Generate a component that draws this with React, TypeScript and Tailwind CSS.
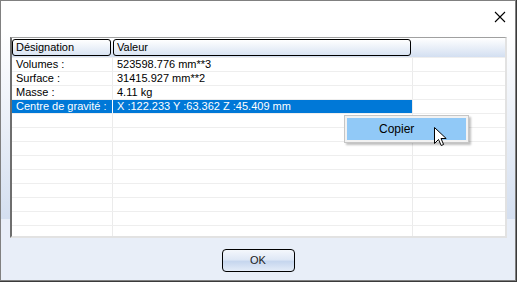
import React from "react";

const rows: [string, string][] = [
  ["Volumes :", "523598.776 mm**3"],
  ["Surface :", "31415.927 mm**2"],
  ["Masse :", "4.11 kg"],
  ["Centre de gravité :", "X :122.233 Y :63.362 Z :45.409 mm"],
];

export default function App() {
  const all: ([string, string] | null)[] = [...rows];
  for (let i = 0; i < 10; i++) all.push(null);
  return (
    <div
      className="w-[517px] h-[282px] bg-[#3a3a3a] overflow-hidden relative"
      style={{ fontFamily: '"Liberation Sans", Arial, sans-serif' }}
    >
      <div className="w-[516px] h-[281px] border border-[#808080] flex flex-col bg-white">
        {/* title bar */}
        <div className="h-[30px] bg-white flex justify-end items-start shrink-0">
          <svg width="12" height="12" viewBox="0 0 12 12" className="mt-[10px] mr-[9px]">
            <path d="M1 1 L11 11 M11 1 L1 11" stroke="#000" strokeWidth="1.1" />
          </svg>
        </div>
        {/* body */}
        <div className="flex-1 flex flex-col bg-[linear-gradient(to_bottom,#ffffff_0px,#d4dff0_188px,#e8eef8_188px)]">
          <div className="mt-[6px] ml-[9px] w-[497px] h-[201px] bg-white border-t border-t-[#a0a0a0] border-l-2 border-l-[#6e6e6e] border-r-2 border-r-[#e2e2e2] border-b-2 border-b-[#e2e2e2] overflow-hidden flex flex-col text-[11px] text-black">
            {/* header */}
            <div className="h-[19px] shrink-0 flex bg-[linear-gradient(to_bottom,#ffffff,#d3dff1)]">
              <div className="w-[101px] pr-[2px] pt-[1px]">
                <div className="h-[17px] border border-black rounded-[3px] pl-[3px] leading-[15px] bg-[linear-gradient(to_bottom,#ffffff,#d9e4f3)]">
                  Désignation
                </div>
              </div>
              <div className="w-[300px] pr-[2px] pt-[1px]">
                <div className="h-[17px] border border-black rounded-[3px] pl-[3px] leading-[15px] bg-[linear-gradient(to_bottom,#ffffff,#d9e4f3)]">
                  Valeur
                </div>
              </div>
              <div className="flex-1" />
            </div>
            {all.map((r, i) => {
              const sel = i === 3;
              return (
                <div key={i} className="h-[14px] shrink-0 flex border-t border-t-[#eeeeee] leading-[13px]">
                  <div
                    className={
                      "w-[101px] pl-[4px] border-r whitespace-nowrap " +
                      (sel ? "bg-[#0078d7] text-white border-r-white" : "border-r-[#ebebeb]")
                    }
                  >
                    {r ? r[0] : ""}
                  </div>
                  <div
                    className={
                      "w-[300px] pl-[4px] border-r border-r-[#ebebeb] whitespace-nowrap " +
                      (sel ? "bg-[#0078d7] text-white" : "")
                    }
                  >
                    {r ? r[1] : ""}
                  </div>
                  <div className="flex-1" />
                </div>
              );
            })}
          </div>
          <div className="flex justify-center mt-[11px]">
            <div className="w-[73px] h-[23px] border border-black rounded-[4px] flex items-center justify-center text-[11px] text-[#1a1a1a] bg-[linear-gradient(to_bottom,#f4f7fc_0%,#dfe8f6_45%,#c6d6ee_55%,#e4ecf8_100%)]">
              OK
            </div>
          </div>
        </div>
      </div>

      {/* context menu */}
      <div className="absolute left-[344px] top-[115px] w-[125px] h-[28px] border border-[#c6c6c6] bg-[#f2f2f2] p-[2px] shadow-[2px_2px_2px_rgba(0,0,0,0.25)]">
        <div className="h-full bg-[#91c9f7] pl-[32px] text-[12px] leading-[22px] text-black">Copier</div>
      </div>

      {/* cursor */}
      <svg width="14" height="20" viewBox="0 0 14 20" className="absolute left-[434px] top-[127px]">
        <path
          d="M0.5 0.5 L0.5 16.5 L4.5 12.5 L7.2 18.5 L9.6 17.5 L7 11.5 L12.2 11.5 Z"
          fill="#fff"
          stroke="#000"
          strokeWidth="1"
          strokeLinejoin="miter"
        />
      </svg>
    </div>
  );
}
